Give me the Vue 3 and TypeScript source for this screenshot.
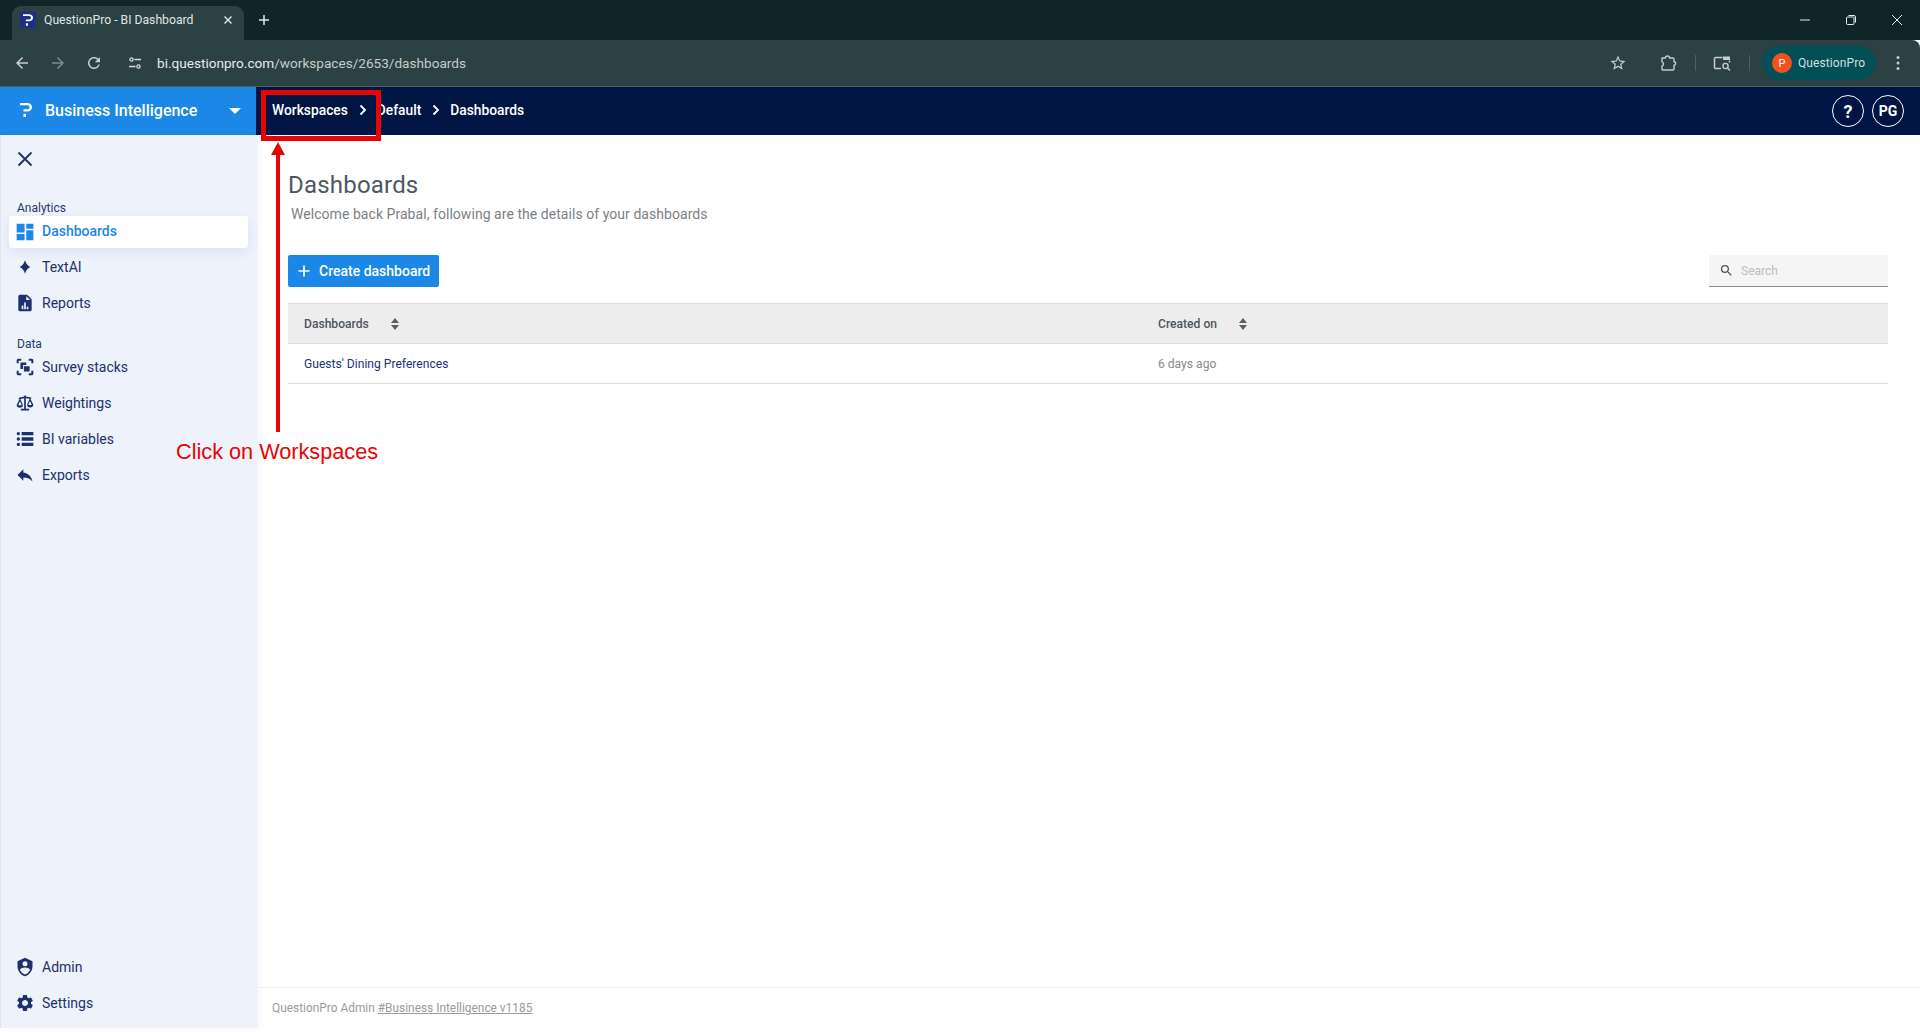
<script setup lang="ts">
interface NavItem { label: string; path: string; active?: boolean }

const analytics: NavItem[] = [
  { label: 'Dashboards', active: true, path: 'M2 12.500h9.500V2H2v10.500zM2 22h9.500v-7.500H2V22zm11.500 0H22V10h-8.500v12zM13.500 2v6H22V2h-8.500z' },
  { label: 'TextAI', path: 'M12 4Q13.800 10 18.500 12 13.800 14 12 20 10.200 14 5.500 12 10.200 10 12 4z' },
  { label: 'Reports', path: 'M6 2h8.500L20 7.500V20a2 2 0 0 1-2 2H6a2 2 0 0 1-2-2V4a2 2 0 0 1 2-2zm7.500 1.800V8.500h4.700zM8 15v4.500h2V15H8zm3-3.500v8h2v-8h-2zm3 5v3h2v-3h-2z' },
]
const data: NavItem[] = [
  { label: 'Survey stacks', path: 'M2 7.500V4a2 2 0 0 1 2-2h3.500v2.400H4.400v3.100H2zm14.500-5.500H20a2 2 0 0 1 2 2v3.500h-2.400V4.400h-3.100V2zM2 16.500h2.400v3.100h3.100V22H4a2 2 0 0 1-2-2v-3.500zm17.600 0H22V20a2 2 0 0 1-2 2h-3.500v-2.400h3.100v-3.100zM6.500 6.500h7v3.200h-3.800v4.800H6.500v-8zm5 4.700h6v6.300h-6.800v-6.300h.8z' },
  { label: 'Weightings', path: 'M11 3h2v1.300l6.500 1V7l-1-.1L22 14c0 2-1.600 3.300-3.800 3.300S14.500 16 14.500 14l3.100-7.100L13 6.300V19h4v2H7v-2h4V6.300L6.400 7.300 9.500 14.500c0 2-1.600 3.300-3.800 3.300S2 16.500 2 14.500l3.500-7.300-1 .2V5.800L11 4.300V3zM6 10 3.800 14.800h4.400L6 10zm12-.5-2.200 4.800h4.400L18 9.500z' },
  { label: 'BI variables', path: 'M2 5.500a2 2 0 1 0 4 0 2 2 0 0 0-4 0zm0 6.500a2 2 0 1 0 4 0 2 2 0 0 0-4 0zm0 6.500a2 2 0 1 0 4 0 2 2 0 0 0-4 0zM8 3.500h14v4H8zm0 6.500h14v4H8zm0 6.500h14v4H8z' },
  { label: 'Exports', path: 'M10 9V5l-7 7 7 7v-4.100c5 0 8.500 1.600 11 5.100-1-5-4-10-11-11z' },
]
const bottom: NavItem[] = [
  { label: 'Admin', path: 'M12 1 3 5v6c0 5.550 3.840 10.740 9 12 5.160-1.260 9-6.450 9-12V5l-9-4zm0 4a3 3 0 1 1 0 6 3 3 0 0 1 0-6zm5.130 12c-1.210 1.850-3.020 3.240-5.130 3.920-2.110-.68-3.920-2.070-5.130-3.920-.34-.5-.63-1-.87-1.530 0-1.650 2.710-3 6-3s6 1.320 6 3c-.24.530-.53 1.030-.87 1.530z' },
  { label: 'Settings', path: 'M19.140 12.940c.04-.3.060-.61.060-.94 0-.32-.02-.64-.07-.94l2.030-1.580a.49.49 0 0 0 .12-.61l-1.920-3.320a.488.488 0 0 0-.59-.22l-2.390.96c-.5-.38-1.030-.7-1.620-.94l-.36-2.540a.484.484 0 0 0-.48-.41h-3.840c-.24 0-.43.17-.47.41l-.36 2.540c-.59.24-1.130.57-1.620.94l-2.390-.96c-.22-.08-.47 0-.59.22L2.740 8.870c-.12.21-.08.47.12.61l2.030 1.580c-.05.3-.09.63-.09.94s.02.64.07.94l-2.030 1.580a.49.49 0 0 0-.12.61l1.920 3.320c.12.22.37.29.59.22l2.390-.96c.5.38 1.030.7 1.620.94l.36 2.540c.05.24.24.41.48.41h3.840c.24 0 .44-.17.47-.41l.36-2.540c.59-.24 1.130-.56 1.620-.94l2.390.96c.22.08.47 0 .59-.22l1.920-3.320c.12-.22.07-.47-.12-.61l-2.010-1.580zM12 15.600c-1.980 0-3.600-1.620-3.600-3.600s1.620-3.600 3.600-3.600 3.600 1.620 3.600 3.600-1.620 3.600-3.600 3.600z' },
]
const logo = 'M0 0h7c3 0 5 1.600 5 4.200S10 8.500 7 8.500H3.500V6.300H7c1.500 0 2.500-.7 2.500-2.100S8.500 2.200 7 2.200H0zM3.500 10.800H6V14H3.500z'
</script>

<template>
  <div class="page">
    <div class="tabstrip">
      <div class="tab">
        <span class="favicon">
          <svg viewBox="0 0 12 14" width="10" height="12"><path :d="logo" fill="#fff" /></svg>
        </span>
        <span class="tab-title">QuestionPro - BI Dashboard</span>
        <svg class="tab-x" viewBox="0 0 12 12" width="12" height="12"><path d="M2.500 2.500l7 7M9.500 2.500l-7 7" stroke="#e4e8e8" stroke-width="1.400" /></svg>
      </div>
      <svg class="tab-plus" viewBox="0 0 12 12" width="12" height="12"><path d="M6 1v10M1 6h10" stroke="#e4e8e8" stroke-width="1.500" /></svg>
      <div class="win-controls">
        <svg viewBox="0 0 12 12" width="12" height="12"><path d="M1 6h10" stroke="#e8ecec" stroke-width="1" /></svg>
        <svg viewBox="0 0 12 12" width="12" height="12"><rect x="1.500" y="3" width="7.500" height="7.500" rx="1" fill="none" stroke="#e8ecec" /><path d="M3.500 1.500H9A1.500 1.500 0 0 1 10.500 3v5.500" fill="none" stroke="#e8ecec" /></svg>
        <svg viewBox="0 0 12 12" width="12" height="12"><path d="M1 1l10 10M11 1 1 11" stroke="#e8ecec" stroke-width="1" /></svg>
      </div>
    </div>

    <div class="toolbar">
      <div class="nav-btns">
        <svg viewBox="0 0 24 24" width="18" height="18"><path fill="#c5cdce" d="M20 11H7.830l5.590-5.590L12 4l-8 8 8 8 1.410-1.410L7.830 13H20v-2z" /></svg>
        <svg viewBox="0 0 24 24" width="18" height="18"><path fill="#7c8b8d" d="M12 4l-1.410 1.410L16.170 11H4v2h12.170l-5.580 5.590L12 20l8-8z" /></svg>
        <svg viewBox="0 0 24 24" width="18" height="18"><path fill="#c5cdce" d="M17.650 6.350C16.200 4.900 14.210 4 12 4c-4.420 0-7.990 3.580-7.990 8s3.570 8 7.990 8c3.730 0 6.840-2.550 7.730-6h-2.080c-.82 2.330-3.040 4-5.650 4-3.310 0-6-2.690-6-6s2.690-6 6-6c1.660 0 3.140.69 4.220 1.780L13 11h7V4l-2.350 2.350z" /></svg>
      </div>
      <svg class="tune" viewBox="0 0 16 16" width="16" height="16"><circle cx="4.500" cy="4.500" r="1.600" fill="none" stroke="#d5dbdb" stroke-width="1.300" /><path d="M7.500 4.500H14M2 11.500h6.500" stroke="#d5dbdb" stroke-width="1.300" /><circle cx="11.500" cy="11.500" r="1.600" fill="none" stroke="#d5dbdb" stroke-width="1.300" /></svg>
      <div class="url"><span class="url-host">bi.questionpro.com</span>/workspaces/2653/dashboards</div>
      <svg class="t-star" viewBox="0 0 24 24" width="18" height="18"><path fill="#c5cdce" d="M22 9.240l-7.190-.62L12 2 9.190 8.630 2 9.240l5.460 4.730L5.820 21 12 17.270 18.180 21l-1.630-7.030L22 9.240zM12 15.400l-3.760 2.270 1-4.280-3.320-2.880 4.380-.38L12 6.100l1.710 4.040 4.380.38-3.320 2.880 1 4.280L12 15.400z" /></svg>
      <svg class="t-ext" viewBox="0 0 18 18" width="18" height="18"><path fill="none" stroke="#c5cdce" stroke-width="1.400" stroke-linejoin="round" d="M3 4h3.500a2 2 0 0 1 4 0H14a1 1 0 0 1 1 1v2.800a1.700 1.700 0 0 1 0 3.400V15a1 1 0 0 1-1 1H4a1 1 0 0 1-1-1v-2.800a2.400 2.400 0 0 0 0-4.400V4z" /></svg>
      <span class="t-sep"></span>
      <svg class="t-media" viewBox="0 0 18 18" width="18" height="18"><path fill="none" stroke="#c5cdce" stroke-width="1.500" d="M8 14.500H2.500a1 1 0 0 1-1-1v-9a1 1 0 0 1 1-1h7" /><rect x="10" y="2.500" width="7" height="3.500" fill="#c5cdce" /><path fill="none" stroke="#c5cdce" stroke-width="1.500" d="M16.500 6.500v2" /><circle cx="12.500" cy="12" r="2.600" fill="none" stroke="#c5cdce" stroke-width="1.400" /><path d="M14.500 14l2.500 2.500" stroke="#c5cdce" stroke-width="1.500" /></svg>
      <span class="t-sep"></span>
      <div class="profile"><span class="avatar">P</span><span class="profile-name">QuestionPro</span></div>
      <svg class="t-dots" viewBox="0 0 4 16" width="4" height="16"><circle cx="2" cy="2.500" r="1.500" fill="#c5cdce" /><circle cx="2" cy="8" r="1.500" fill="#c5cdce" /><circle cx="2" cy="13.500" r="1.500" fill="#c5cdce" /></svg>
    </div>

    <header class="appbar">
      <div class="brand">
        <svg class="brand-logo" viewBox="0 0 12 14" width="12" height="14"><path :d="logo" fill="#fff" /></svg>
        <span class="brand-name">Business Intelligence</span>
        <span class="caret"></span>
      </div>
      <nav class="crumbs">
        <span class="crumb">Workspaces</span>
        <svg class="chev" viewBox="0 0 8 12" width="8" height="12"><path d="M1.500 1.500 6 6l-4.500 4.500" fill="none" stroke="#fff" stroke-width="1.800" /></svg>
        <span class="crumb">Default</span>
        <svg class="chev" viewBox="0 0 8 12" width="8" height="12"><path d="M1.500 1.500 6 6l-4.500 4.500" fill="none" stroke="#fff" stroke-width="1.800" /></svg>
        <span class="crumb">Dashboards</span>
      </nav>
      <div class="bar-actions">
        <span class="circle help">?</span>
        <span class="circle">PG</span>
      </div>
    </header>

    <div class="body">
      <aside class="sidebar">
        <button class="close-btn" type="button" aria-label="Close">
          <svg viewBox="0 0 16 16" width="16" height="16"><path d="M1.500 1.500l13 13M14.500 1.500l-13 13" stroke="#1e2f6e" stroke-width="1.800" /></svg>
        </button>
        <div class="label first">Analytics</div>
        <div v-for="it in analytics" :key="it.label" class="item" :class="{ active: it.active }">
          <svg class="ico" viewBox="0 0 24 24"><path fill-rule="evenodd" :d="it.path" /></svg>
          <span class="item-text">{{ it.label }}</span>
        </div>
        <div class="label second">Data</div>
        <div v-for="it in data" :key="it.label" class="item">
          <svg class="ico" viewBox="0 0 24 24"><path fill-rule="evenodd" :d="it.path" /></svg>
          <span class="item-text">{{ it.label }}</span>
        </div>
        <div class="spacer"></div>
        <div v-for="it in bottom" :key="it.label" class="item">
          <svg class="ico" viewBox="0 0 24 24"><path fill-rule="evenodd" :d="it.path" /></svg>
          <span class="item-text">{{ it.label }}</span>
        </div>
      </aside>

      <div class="content">
        <main class="main">
          <h1 class="title">Dashboards</h1>
          <p class="subtitle">Welcome back Prabal, following are the details of your dashboards</p>
          <div class="actions">
            <button class="create" type="button">
              <svg viewBox="0 0 12 12" width="12" height="12"><path d="M6 0.500v11M0.500 6h11" stroke="#fff" stroke-width="1.700" /></svg>
              <span>Create dashboard</span>
            </button>
            <div class="search">
              <svg viewBox="0 0 24 24" width="15" height="15"><path fill="#4f555d" d="M15.500 14h-.79l-.28-.27A6.470 6.470 0 0 0 16 9.500 6.500 6.500 0 1 0 9.500 16c1.610 0 3.090-.59 4.230-1.570l.27.28v.79l5 4.990L20.490 19l-4.990-5zm-6 0C7.010 14 5 11.990 5 9.500S7.010 5 9.500 5 14 7.010 14 9.500 11.990 14 9.500 14z" /></svg>
              <span>Search</span>
            </div>
          </div>
          <div class="table">
            <div class="row head">
              <div class="cell"><span>Dashboards</span><svg class="sort" viewBox="0 0 10 14" width="10" height="14"><path d="M5 1 9 6H1zM5 13 1 8h8z" fill="#5a6068" /></svg></div>
              <div class="cell"><span>Created on</span><svg class="sort" viewBox="0 0 10 14" width="10" height="14"><path d="M5 1 9 6H1zM5 13 1 8h8z" fill="#5a6068" /></svg></div>
            </div>
            <div class="row">
              <div class="cell link">Guests' Dining Preferences</div>
              <div class="cell date">6 days ago</div>
            </div>
          </div>
        </main>
        <footer class="footer">QuestionPro Admin <u>#Business Intelligence v1185</u></footer>
      </div>
    </div>

    <div class="mark-box"></div>
    <svg class="mark-arrow" viewBox="0 0 20 292" width="20" height="292"><path d="M10 0 17 13H12V290H8V13H3z" fill="#e60505" /></svg>
    <div class="mark-text">Click on Workspaces</div>
  </div>
</template>

<style scoped>
.page {
  position: relative;
  width: 1920px;
  height: 1032px;
  display: flex;
  flex-direction: column;
  overflow: hidden;
  background: #fff;
  font-family: Roboto, "Noto Sans", sans-serif;
}
.tabstrip {
  height: 40px;
  flex: none;
  display: flex;
  align-items: flex-end;
  background: #0f2527;
  padding-left: 12px;
}
.tab {
  width: 232px;
  height: 34px;
  display: flex;
  align-items: center;
  background: #2c4144;
  border-radius: 9px 9px 0 0;
  padding: 0 10px 6px 8px;
  box-sizing: border-box;
  color: #dfe5e5;
  font-size: 12.2px;
}
.favicon {
  width: 16px;
  height: 16px;
  background: #1f2f86;
  flex: none;
  display: flex;
  align-items: center;
  justify-content: center;
}
.tab-title { margin-left: 8px; flex: 1; white-space: nowrap; }
.tab-plus { margin: 0 0 14px 14px; }
.win-controls {
  margin-left: auto;
  align-self: center;
  display: flex;
  gap: 34px;
  padding-right: 17px;
}
.toolbar {
  height: 47px;
  flex: none;
  display: flex;
  align-items: center;
  background: #2c4144;
  border-bottom: 1px solid #4b5d60;
  box-sizing: border-box;
  padding-left: 13px;
  border-top-right-radius: 8px;
}
.nav-btns { display: flex; gap: 18px; }
.tune { margin-left: 24px; }
.url {
  margin-left: 14px;
  font-size: 13.6px;
  color: #c3cccd;
  white-space: nowrap;
}
.url-host { color: #e6eaea; }
.t-star { margin-left: auto; }
.t-ext { margin-left: 32px; }
.t-sep { width: 1px; height: 16px; background: #4d6063; margin: 0 17px 0 18px; }
.t-media { margin: 0; }
.profile {
  height: 34px;
  width: 114px;
  box-sizing: border-box;
  margin-left: -5px;
  display: flex;
  align-items: center;
  padding-left: 10px;
  gap: 6px;
  border-radius: 17px;
  background: #024f56;
  color: #cfdfe0;
  font-size: 12px;
  letter-spacing: 0.1px;
}
.avatar {
  width: 20px;
  height: 20px;
  border-radius: 50%;
  background: #f4511e;
  color: #fff;
  font-size: 11px;
  display: flex;
  align-items: center;
  justify-content: center;
}
.t-dots { margin: 0 20px 0 20px; }
.appbar {
  height: 48px;
  flex: none;
  display: flex;
  align-items: center;
  background: #001543;
  color: #fff;
}
.brand {
  width: 256px;
  height: 100%;
  flex: none;
  display: flex;
  align-items: center;
  background: #1b87e6;
  padding: 0 0 2px 20px;
  box-sizing: border-box;
}
.brand-name { margin-left: 13px; font-size: 16px; font-weight: 500; white-space: nowrap; }
.caret {
  margin: 2px 0 0 32px;
  width: 0;
  height: 0;
  border-left: 6px solid transparent;
  border-right: 6px solid transparent;
  border-top: 6px solid #fff;
}
.crumbs {
  display: flex;
  align-items: center;
  margin-left: 16px;
  padding-bottom: 2px;
  font-size: 13.8px;
  font-weight: 500;
}
.chev { margin: 0 10px 0 11px; }
.bar-actions { margin-left: auto; display: flex; gap: 8px; padding-right: 16px; }
.circle {
  width: 32px;
  height: 32px;
  border: 1px solid #fff;
  border-radius: 50%;
  box-sizing: border-box;
  display: flex;
  align-items: center;
  justify-content: center;
  font-size: 14px;
  font-weight: 700;
}
.help { font-size: 18px; }
.body { flex: 1; display: flex; min-height: 0; margin-bottom: 4px; }
.sidebar {
  width: 258px;
  flex: none;
  display: flex;
  flex-direction: column;
  box-sizing: border-box;
  padding: 10px 0 7px 1px;
  background: #edf2fb;
  border-left: 1px solid #e1e4ea;
  box-shadow: 2px 0 6px rgba(30, 50, 100, 0.04);
  color: #1e2f6e;
  font-size: 14px;
  position: relative;
}
.close-btn {
  height: 28px;
  width: 30px;
  margin-left: 8px;
  padding: 0;
  border: 0;
  background: none;
  display: flex;
  align-items: center;
  justify-content: center;
}
.label {
  height: 12px;
  line-height: 12px;
  font-size: 12px;
  margin-left: 15px;
  color: #26386f;
}
.first { margin-top: 29px; margin-bottom: 2px; }
.second { margin-top: 17px; margin-bottom: -1px; }
.item {
  height: 36px;
  flex: none;
  display: flex;
  align-items: center;
  margin: 0 10px 0 7px;
  padding-left: 6px;
  gap: 7px;
  border-radius: 3px;
}
.ico { fill: #1e2f6e; flex: none; width: 20px; height: 20px; }
.item.active {
  height: 32px;
  background: #fff;
  color: #1b87e6;
  font-weight: 500;
  box-shadow: 0 4px 12px rgba(30, 60, 130, 0.08);
  margin-bottom: 1px;
}
.item.active .item-text { margin-top: -2px; }
.item.active .ico { fill: #1b87e6; margin-top: -1px; }
.spacer { flex: 1; }
.content { flex: 1; min-width: 0; display: flex; flex-direction: column; }
.main { flex: 1; padding: 35px 32px 0 30px; }
.title {
  margin: 0;
  font-size: 24px;
  line-height: 30px;
  font-weight: 400;
  color: #4d5764;
  letter-spacing: 0.2px;
}
.subtitle {
  margin: 4px 0 0 3px;
  font-size: 14px;
  line-height: 20px;
  color: #7b7f86;
  letter-spacing: 0.05px;
}
.actions {
  margin-top: 31px;
  display: flex;
  justify-content: space-between;
}
.create {
  width: 151px;
  height: 32px;
  border: 0;
  border-radius: 2px;
  background: #1b87e6;
  color: #fff;
  display: flex;
  align-items: center;
  padding-left: 10px;
  gap: 9px;
  font-family: inherit;
  font-size: 14px;
  font-weight: 500;
  white-space: nowrap;
}
.search {
  width: 179px;
  height: 32px;
  box-sizing: border-box;
  background: #f5f5f5;
  border-bottom: 1px solid #8d8d8d;
  display: flex;
  align-items: center;
  gap: 7px;
  padding-left: 10px;
  font-size: 12px;
  color: #bdbdbd;
}
.table { margin-top: 16px; }
.row {
  display: grid;
  grid-template-columns: 854px 1fr;
  height: 40px;
  box-sizing: border-box;
  border-bottom: 1px solid #dedede;
  font-size: 12.1px;
}
.head {
  height: 41px;
  background: #ededed;
  border-top: 1px solid #dedede;
  color: #4d5561;
  font-weight: 500;
}
.cell { display: flex; align-items: center; padding-left: 16px; white-space: nowrap; }
.sort { margin-left: 21px; }
.link { color: #1e2f7a; }
.date { color: #8a8a8a; }
.footer {
  height: 41px;
  flex: none;
  box-sizing: border-box;
  border-top: 1px solid #f1f1f1;
  padding: 10px 0 0 14px;
  font-size: 11.9px;
  line-height: 20px;
  color: #9b9b9b;
}
.mark-box {
  position: absolute;
  left: 261px;
  top: 90px;
  width: 120px;
  height: 51px;
  box-sizing: border-box;
  border: 5px solid #e60505;
}
.mark-arrow { position: absolute; left: 268px; top: 142px; }
.mark-text {
  position: absolute;
  left: 176px;
  top: 438px;
  font-family: "Liberation Sans", Arial, sans-serif;
  font-size: 21.7px;
  line-height: 28px;
  color: #e60505;
  white-space: nowrap;
}
</style>

<style>
html, body { margin: 0; background: #fff; }
</style>
